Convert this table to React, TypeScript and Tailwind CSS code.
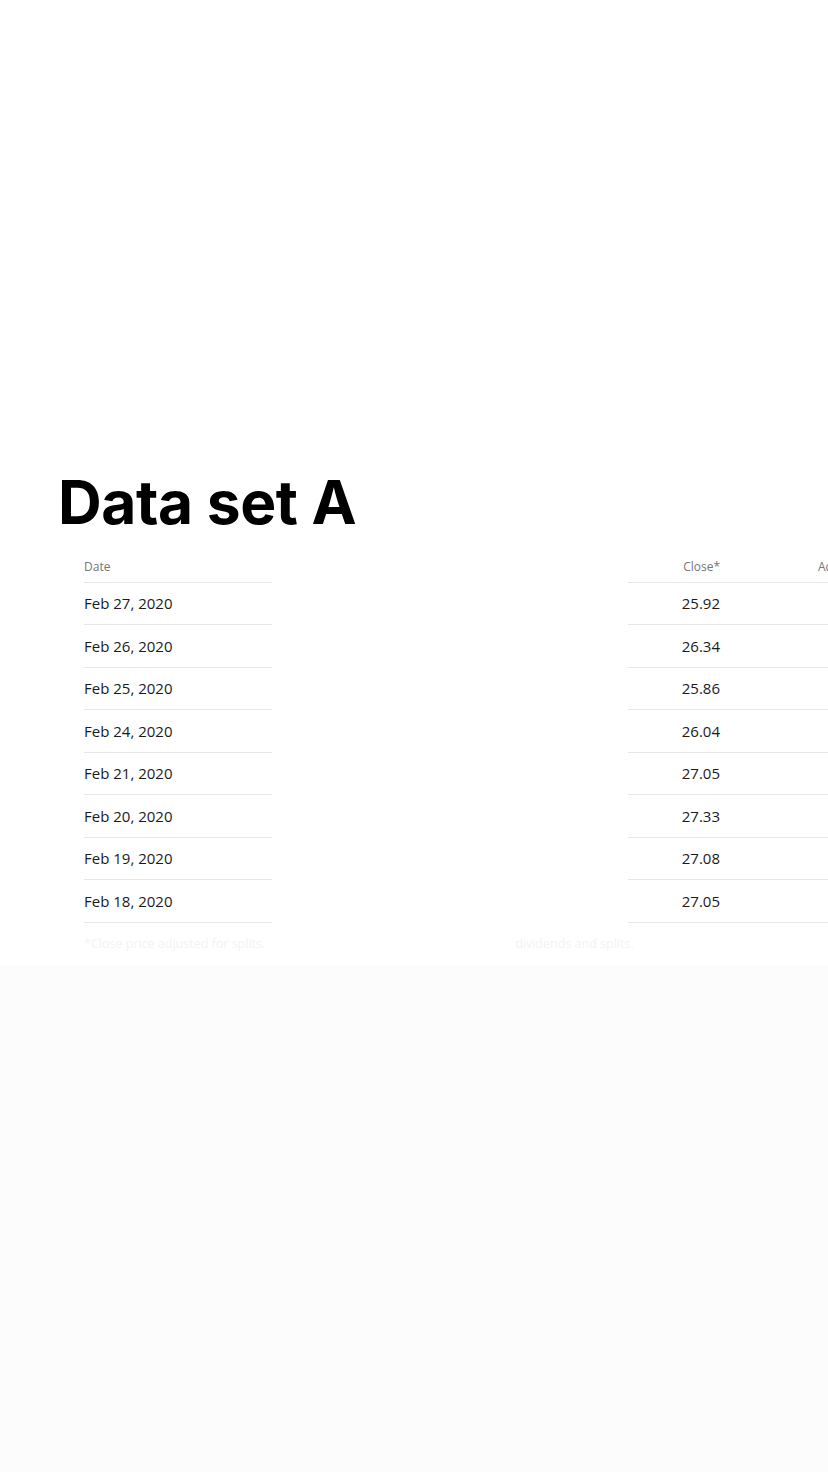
const rows = [
  { date: 'Feb 27, 2020', close: '25.92' },
  { date: 'Feb 26, 2020', close: '26.34' },
  { date: 'Feb 25, 2020', close: '25.86' },
  { date: 'Feb 24, 2020', close: '26.04' },
  { date: 'Feb 21, 2020', close: '27.05' },
  { date: 'Feb 20, 2020', close: '27.33' },
  { date: 'Feb 19, 2020', close: '27.08' },
  { date: 'Feb 18, 2020', close: '27.05' },
];

/** Cropped price-history table: only the Date and Close columns survive the mask. */
function Row({ date, close }: { date: string; close: string }) {
  return (
    <div className="flex h-[42.5px] items-center text-[15px] text-[#1b1b1b]">
      <div className="flex h-full w-[188px] shrink-0 items-center border-b border-[#e6e6e6]">{date}</div>
      <div className="h-full flex-1" />
      <div className="flex h-full w-[200px] shrink-0 items-center border-b border-[#e6e6e6]">
        <span className="w-[92px] shrink-0 text-right">{close}</span>
      </div>
    </div>
  );
}

export default function App() {
  return (
    <div className="flex min-h-[1472px] flex-col overflow-hidden bg-[#fcfcfc]">
      <div className="h-[966px] bg-white pt-[472px]">
        <h1 className="pl-[58px] font-['Inter',sans-serif] text-[60.5px] font-bold leading-none tracking-[-0.4px] text-black">
          Data set A
        </h1>
        <div className="mt-[20px] pl-[84px] font-['Open_Sans',sans-serif]">
          <div className="flex h-[30px] items-center text-[12px] text-[#767676]">
            <div className="flex h-full w-[188px] shrink-0 items-center border-b border-[#e6e6e6]">Date</div>
            <div className="h-full flex-1" />
            <div className="flex h-full w-[200px] shrink-0 items-center overflow-hidden border-b border-[#e6e6e6]">
              <span className="w-[92px] shrink-0 text-right">Close*</span>
              <span className="ml-[98px] shrink-0 whitespace-nowrap">Adj Close**</span>
            </div>
          </div>
          {rows.map((r) => (
            <Row key={r.date} date={r.date} close={r.close} />
          ))}
          <p className="mt-[12px] whitespace-nowrap text-[12.5px] text-[#f3f3f3]">
            *Close price adjusted for splits.<span className="text-transparent">**Adjusted close price adjusted for both </span>
            <span className="ml-[12px]">dividends and splits.</span>
          </p>
        </div>
      </div>
    </div>
  );
}
